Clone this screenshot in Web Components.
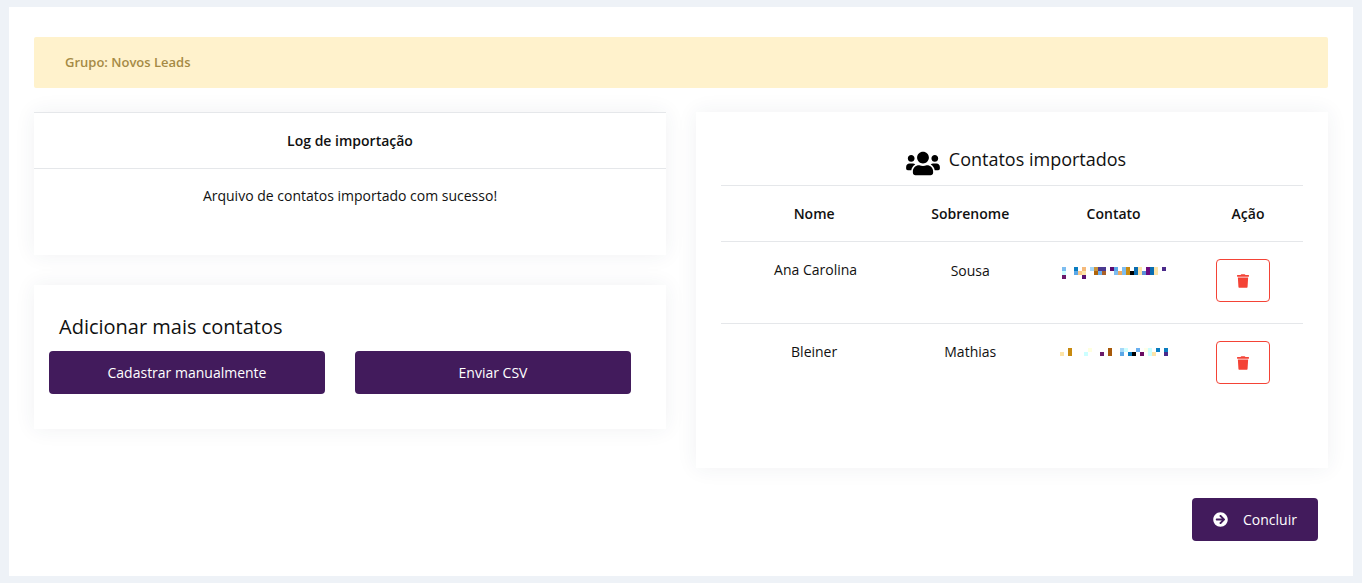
<!DOCTYPE html>
<html lang="pt-BR">
<head>
<meta charset="utf-8">
<title>Importação</title>
<style>
html,body{margin:0;padding:0;background:#eef2f7;}
body{font-family:"Open Sans",sans-serif;color:#111;font-size:14px;}
</style>
</head>
<body>
<import-page>
  <group-alert slot="alert">Grupo: Novos Leads</group-alert>
  <log-card slot="left"></log-card>
  <add-card slot="left"></add-card>
  <contacts-card slot="right"></contacts-card>
  <action-button slot="footer" icon="arrow" style="width:126px">Concluir</action-button>
</import-page>
<script>
const ICONS={
 users:['0 0 640 512','M96 224c35.3 0 64-28.7 64-64s-28.7-64-64-64-64 28.7-64 64 28.7 64 64 64zm448 0c35.3 0 64-28.7 64-64s-28.7-64-64-64-64 28.7-64 64 28.7 64 64 64zm32 32h-64c-17.6 0-33.5 7.1-45.1 18.6 40.3 22.1 68.9 62 75.1 109.4h66c17.7 0 32-14.3 32-32v-32c0-35.3-28.7-64-64-64zm-256 0c61.9 0 112-50.1 112-112S381.9 32 320 32 208 82.1 208 144s50.1 112 112 112zm76.8 32h-8.3c-20.8 10-43.9 16-68.5 16s-47.6-6-68.5-16h-8.3C179.6 288 128 339.6 128 403.2V432c0 26.5 21.5 48 48 48h288c26.5 0 48-21.5 48-48v-28.8c0-63.6-51.6-115.2-115.2-115.2zm-223.7-13.4C161.5 263.1 145.6 256 128 256H64c-35.3 0-64 28.7-64 64v32c0 17.7 14.3 32 32 32h65.9c6.3-47.4 34.9-87.3 75.2-109.4z'],
 trash:['0 0 448 512','M432 32H312l-9.4-18.7A24 24 0 0 0 281.1 0H166.8a23.72 23.72 0 0 0-21.4 13.3L136 32H16A16 16 0 0 0 0 48v32a16 16 0 0 0 16 16h416a16 16 0 0 0 16-16V48a16 16 0 0 0-16-16zM53.2 467a48 48 0 0 0 47.9 45h245.8a48 48 0 0 0 47.9-45L416 128H32z'],
 arrow:['0 0 512 512','M256 8c137 0 248 111 248 248S393 504 256 504 8 393 8 256 119 8 256 8zm-28.9 143.6l75.5 72.4H120c-13.3 0-24 10.7-24 24v16c0 13.3 10.7 24 24 24h182.6l-75.5 72.4c-9.7 9.3-9.9 24.8-.4 34.3l11 10.9c9.4 9.4 24.6 9.4 33.9 0L404.3 273c9.4-9.4 9.4-24.6 0-33.9L271.6 106.3c-9.4-9.4-24.6-9.4-33.9 0l-11 10.9c-9.3 9.6-9.1 25.1.4 34.4z']
};
const svg=(n,w,h,fill='currentColor')=>`<svg xmlns="http://www.w3.org/2000/svg" viewBox="${ICONS[n][0]}" width="${w}" height="${h}" fill="${fill}" style="display:block"><path d="${ICONS[n][1]}"/></svg>`;
const CARD_SHADOW='0 0 20px rgba(40,60,90,.07)';
const COLS='186.25px 126px 159.75px 110px';
function def(name,html){
  customElements.define(name,class extends HTMLElement{
    constructor(){super();this.attachShadow({mode:'open'}).innerHTML=typeof html==='function'?html(this):html;}
  });
}
def('import-page',`<style>
:host{display:block;box-sizing:border-box;width:1344px;height:569px;margin:7px 0 0 9px;background:#fff;padding:30px 25px 0;}
.cols{display:grid;grid-template-columns:632px 632px;column-gap:30px;margin-top:24px;}
.stack{display:flex;flex-direction:column;gap:30px;}
footer{display:flex;justify-content:flex-end;margin-top:30px;padding-right:10px;}
</style>
<slot name="alert"></slot>
<div class="cols"><div class="stack"><slot name="left"></slot></div><div class="stack"><slot name="right"></slot></div></div>
<footer><slot name="footer"></slot></footer>`);
def('group-alert',`<style>
:host{display:flex;align-items:center;height:51px;box-sizing:border-box;padding:0 31px 2px;background:#fff2cc;border-radius:2px;color:#a58a45;font-weight:600;font-size:13px;}
</style><slot></slot>`);
def('log-card',`<style>
:host{display:block;height:143px;box-sizing:border-box;background:#fff;border-top:1px solid #e5e7ea;box-shadow:${CARD_SHADOW};text-align:center;font-size:14px;}
h2{margin:0;height:55px;line-height:56px;font-size:14px;font-weight:600;border-bottom:1px solid #e5e7ea;}
p{margin:0;padding-top:17px;line-height:20px;}
</style><h2>Log de importação</h2><p>Arquivo de contatos importado com sucesso!</p>`);
def('add-card',`<style>
:host{display:block;height:144px;box-sizing:border-box;background:#fff;box-shadow:${CARD_SHADOW};padding:28px 15px 0;}
h2{margin:0 0 10px 10px;font-size:20px;line-height:28px;font-weight:400;}
.row{display:grid;grid-template-columns:276px 276px;column-gap:30px;}
</style><h2>Adicionar mais contatos</h2>
<div class="row"><action-button>Cadastrar manualmente</action-button><action-button>Enviar CSV</action-button></div>`);
def('action-button',el=>{
  const i=el.getAttribute('icon');
  return `<style>
:host{display:flex;align-items:center;justify-content:center;height:43px;box-sizing:border-box;background:#421b5c;color:#fff;border-radius:4px;font-size:14px;font-weight:500;cursor:pointer;}
.i{margin-right:15px;}
</style>${i?`<span class="i">${svg(i,15,15)}</span>`:''}<slot></slot>`;
});
def('contacts-card',`<style>
:host{display:block;height:356px;box-sizing:border-box;background:#fff;box-shadow:${CARD_SHADOW};padding:30px 25px 0;}
h2{display:flex;align-items:center;justify-content:center;gap:9px;margin:0;height:33px;font-size:18px;font-weight:400;border-bottom:1px solid #e5e7ea;padding:0 0 10px 8px;}
h2 svg{color:#000;margin-top:9px;}
.head{display:grid;grid-template-columns:${COLS};height:55px;align-items:center;text-align:center;font-weight:600;border-bottom:1px solid #e5e7ea;}
.nudge{padding-left:1px;}
</style>
<h2>${svg('users',34,27)}<span>Contatos importados</span></h2>
<div class="head"><span>Nome</span><span>Sobrenome</span><span class="nudge">Contato</span><span>Ação</span></div>
<contact-row first="Ana Carolina" last="Sousa" variant="a" nudge="3" lastpad="1" bordered></contact-row>
<contact-row first="Bleiner" last="Mathias" variant="b" nudge="0" lastpad="0"></contact-row>`);
def('contact-row',el=>`<style>
:host{display:grid;grid-template-columns:${COLS};height:82px;box-sizing:border-box;text-align:center;padding-top:18px;${el.hasAttribute('bordered')?'border-bottom:1px solid #e5e7ea;':''}}
.t{line-height:20px;}
.b{display:flex;justify-content:center;padding-right:10px;margin-top:-1px;}
button{all:unset;box-sizing:border-box;width:54px;height:43px;padding-top:1px;border:1px solid #f44336;border-radius:4px;display:flex;align-items:center;justify-content:center;cursor:pointer;}
</style>
<div class="t" style="padding-left:${el.getAttribute('nudge')}px">${el.getAttribute('first')}</div>
<div class="t" style="padding-top:${el.getAttribute('lastpad')}px">${el.getAttribute('last')}</div>
<div><blur-contact variant="${el.getAttribute('variant')}"></blur-contact></div>
<div class="b"><button aria-label="Excluir">${svg('trash',12,14,'#f44336')}</button></div>`);
const CELLS={
 a:{x:28.75,y:7,rows:[
  {0:'#7dbdf0',3:'#0a7cc0',5:'#f5b97a',7:'#a5d8f8',8:'#c89038',9:'#4a3a90',10:'#4a3a90',12:'#5c0a70',13:'#5aa8e8',15:'#7dbdf0',16:'#c88a10',18:'#0a6cb0',19:'#fde4a8',21:'#6a0a80',22:'#0a6cb0',23:'#fde4a8',25:'#4a2a8a'},
  {0:'#ccffff',3:'#5aa8e8',4:'#fbc88a',5:'#fde4a8',8:'#b0640a',9:'#6ab0f0',10:'#a8602a',13:'#7dbdf0',14:'#eea860',15:'#7dbdf0',16:'#c88a10',17:'#000',18:'#0a6cb0',19:'#fde4a8',20:'#5a90d8',21:'#6a0a80',22:'#0a6cb0',23:'#fde4a8'},
  {0:'#6a1a6a',5:'#5a1070'}]},
 b:{x:26.75,y:6,rows:[
  {2:'#c88a10',7:'#ffffe0',12:'#a85a0a',15:'#a5d8f8',16:'#ccffff',19:'#6ab0f0',21:'#ffffe8',22:'#ccffff',24:'#0a7cc0',26:'#0a7cc0'},
  {0:'#fde4a8',2:'#c88a10',6:'#ccffff',10:'#6a1a6a',12:'#a85a0a',15:'#5aa8e8',17:'#0a7cc0',18:'#000',20:'#6a0a60',22:'#ccffff',23:'#fde4a8',26:'#4a2a8a'}]}
};
def('blur-contact',el=>{
  const d=CELLS[el.getAttribute('variant')];let r='';
  d.rows.forEach((row,y)=>{for(const c in row)r+=`<rect x="${c*4}" y="${y*4}" width="4" height="4" fill="${row[c]}"/>`;});
  return `<style>:host{display:block;width:108px;height:12px;margin:${d.y}px 0 0 ${d.x}px;}svg{display:block}</style><svg xmlns="http://www.w3.org/2000/svg" width="108" height="12" shape-rendering="crispEdges">${r}</svg>`;
});
</script>
</body>
</html>
